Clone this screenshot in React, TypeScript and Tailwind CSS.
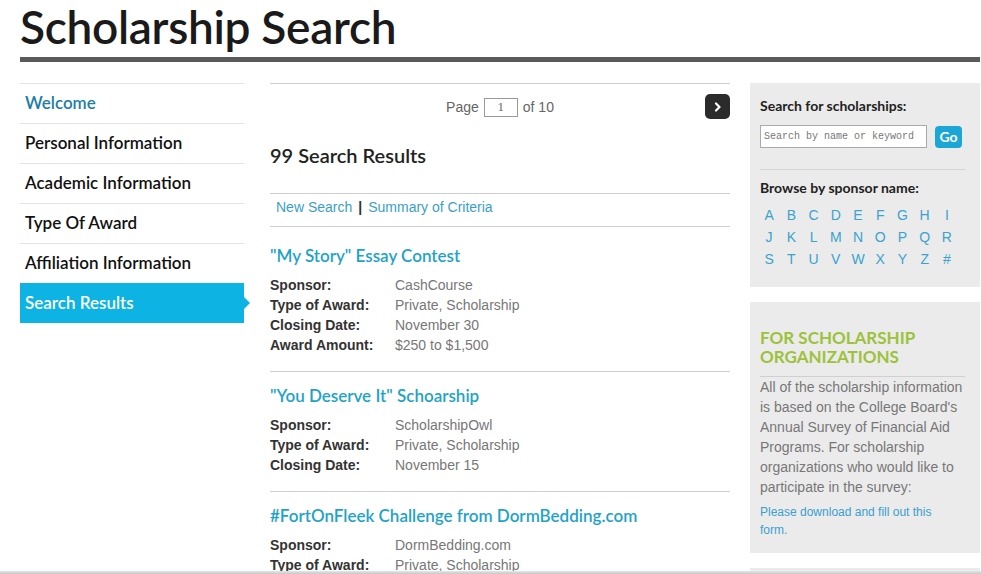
import React from "react";

const HEAD = { fontFamily: "Lato, 'Open Sans', sans-serif" };
const BODY = { fontFamily: "'Liberation Sans', Arial, sans-serif" };

const NAV = ["Welcome", "Personal Information", "Academic Information", "Type Of Award", "Affiliation Information"];

type Result = { title: string; rows: [string, string][] };

const RESULTS: Result[] = [
  {
    title: "\"My Story\" Essay Contest",
    rows: [
      ["Sponsor:", "CashCourse"],
      ["Type of Award:", "Private, Scholarship"],
      ["Closing Date:", "November 30"],
      ["Award Amount:", "$250 to $1,500"],
    ],
  },
  {
    title: "\"You Deserve It\" Schoarship",
    rows: [
      ["Sponsor:", "ScholarshipOwl"],
      ["Type of Award:", "Private, Scholarship"],
      ["Closing Date:", "November 15"],
    ],
  },
  {
    title: "#FortOnFleek Challenge from DormBedding.com",
    rows: [
      ["Sponsor:", "DormBedding.com"],
      ["Type of Award:", "Private, Scholarship"],
      ["Closing Date:", "November 1"],
    ],
  },
];

const LETTERS = "ABCDEFGHIJKLMNOPQRSTUVWXYZ#".split("");

export default function App() {
  return (
    <div className="h-[574px] overflow-hidden bg-white pl-5 pr-[1px] relative">
      {/* ── TITLE ── */}
      <h1 style={HEAD} className="text-[46px] leading-[54px] font-semibold text-[#1a1a1a] h-[57px] tracking-[-0.3px]">
        Scholarship Search
      </h1>
      <div className="h-[5px] bg-[#5a5a5a]" />

      <div className="flex mt-[21px]">
        {/* ── LEFT NAV ── */}
        <nav style={HEAD} className="w-[224px] shrink-0">
          {NAV.map((item, i) => (
            <div key={item}
              className={`h-10 border-t border-[#e3e3e3] flex items-center pl-[5px] pb-[1px] text-[17px] font-semibold ${i === 0 ? "text-[#1b7ea6]" : "text-[#111]"}`}>
              {item}
            </div>
          ))}
          <div className="relative h-10 bg-[#0db3e2] flex items-center pl-[5px] pb-[1px] text-[17px] font-semibold text-white">
            Search Results
            <span className="absolute -right-[6px] top-[14px] w-0 h-0 border-y-[6px] border-y-transparent border-l-[6px] border-l-[#0db3e2]" />
          </div>
        </nav>

        {/* ── RESULTS ── */}
        <main className="w-[460px] ml-[26px] shrink-0">
          <div className="border-t border-[#cfcfcf] h-[47px] flex items-center relative">
            <div style={BODY} className="flex-1 flex items-center justify-center gap-[5px] text-[14px] text-[#666]">
              <span>Page</span>
              <span style={{ fontFamily: "'Liberation Serif', serif" }}
                className="w-[34px] h-[19px] border border-[#999] flex items-center justify-center text-[13px] text-[#666]">1</span>
              <span>of 10</span>
            </div>
            <button className="absolute right-0 top-[10px] w-[25px] h-[25px] rounded-[5px] bg-[#2b2b2b] flex items-center justify-center">
              <svg width="10" height="10" viewBox="0 0 10 10">
                <path d="M3 1.5 L6.5 5 L3 8.5" stroke="white" strokeWidth="2.2" fill="none" strokeLinecap="round" strokeLinejoin="round" />
              </svg>
            </button>
          </div>
          <h2 style={HEAD} className="text-[20px] font-semibold text-[#222] mt-[12px] h-[51px] leading-[26px]">
            99 Search Results
          </h2>
          <div style={BODY} className="border-y border-[#cfcfcf] h-[34px] flex items-start pt-[3px] pl-[6px] text-[14px] text-[#3a9fc8]">
            <span>New Search</span>
            <span className="text-[#333] font-bold mx-[6px]">|</span>
            <span>Summary of Criteria</span>
          </div>

          {RESULTS.map((r, i) => (
            <div key={r.title} className={`${i === 0 ? "pt-[17px]" : "pt-[12px]"} pb-[16px] ${i < RESULTS.length - 1 ? "border-b border-[#cfcfcf]" : ""}`}>
              <h3 style={HEAD} className="text-[17px] font-semibold text-[#1ea3c8] leading-[24px] mb-[7px]">{r.title}</h3>
              <div style={BODY} className="text-[14px] leading-[20px]">
                {r.rows.map(([k, v]) => (
                  <div key={k} className="flex">
                    <span className="w-[125px] font-bold text-[#333]">{k}</span>
                    <span className="text-[#777]">{v}</span>
                  </div>
                ))}
              </div>
            </div>
          ))}
        </main>

        {/* ── RIGHT SIDEBAR ── */}
        <aside className="w-[230px] ml-5 shrink-0 flex flex-col gap-[15px]">
          <div className="bg-[#ebebeb] px-[10px] pt-[13px] pb-[17px]">
            <div style={HEAD} className="text-[14px] font-bold text-[#222] leading-5">Search for scholarships:</div>
            <div className="flex items-center mt-[9px] gap-2">
              <div style={{ fontFamily: "'Liberation Mono', monospace" }}
                className="w-[167px] h-[23px] bg-white border border-[#aaa] flex items-center px-[3px] text-[10px] text-[#777]">
                Search by name or keyword
              </div>
              <button style={HEAD} className="w-[27px] h-[22px] rounded-[4px] bg-[#1aa6d6] text-white text-[14px] font-bold leading-none">Go</button>
            </div>
            <div className="border-t border-[#d4d4d4] mt-[21px] mr-[5px]" />
            <div style={HEAD} className="text-[14px] font-bold text-[#222] leading-5 mt-[8px]">Browse by sponsor name:</div>
            <div style={BODY} className="grid grid-cols-9 w-[200px] mt-[6px] -ml-[2px] text-[14px] leading-[22px] text-[#3aa3cf]">
              {LETTERS.map(l => (
                <span key={l} className="text-center">{l}</span>
              ))}
            </div>
          </div>

          <div className="bg-[#ebebeb] px-[10px] pt-[26px] pb-[14px]">
            <div style={HEAD} className="text-[17px] font-bold text-[#9cc23a] leading-[19px] uppercase">
              For Scholarship<br />Organizations
            </div>
            <div className="border-t border-[#cfcfcf] mt-[10px] mr-[5px]" />
            <p style={BODY} className="text-[14px] leading-[20px] text-[#777]">
              All of the scholarship information is based on the College Board's Annual Survey of Financial Aid Programs. For scholarship organizations who would like to participate in the survey:
            </p>
            <p style={BODY} className="text-[12px] leading-[18px] text-[#3aa0d0] mt-[6px] pr-8">
              Please download and fill out this form.
            </p>
          </div>

          <div className="bg-[#ebebeb] h-10" />
        </aside>
      </div>

      <div className="fixed left-0 right-0 bottom-0 h-[3px] bg-gradient-to-b from-[#e6e6e6] to-[#c8c8c8]" />
    </div>
  );
}
